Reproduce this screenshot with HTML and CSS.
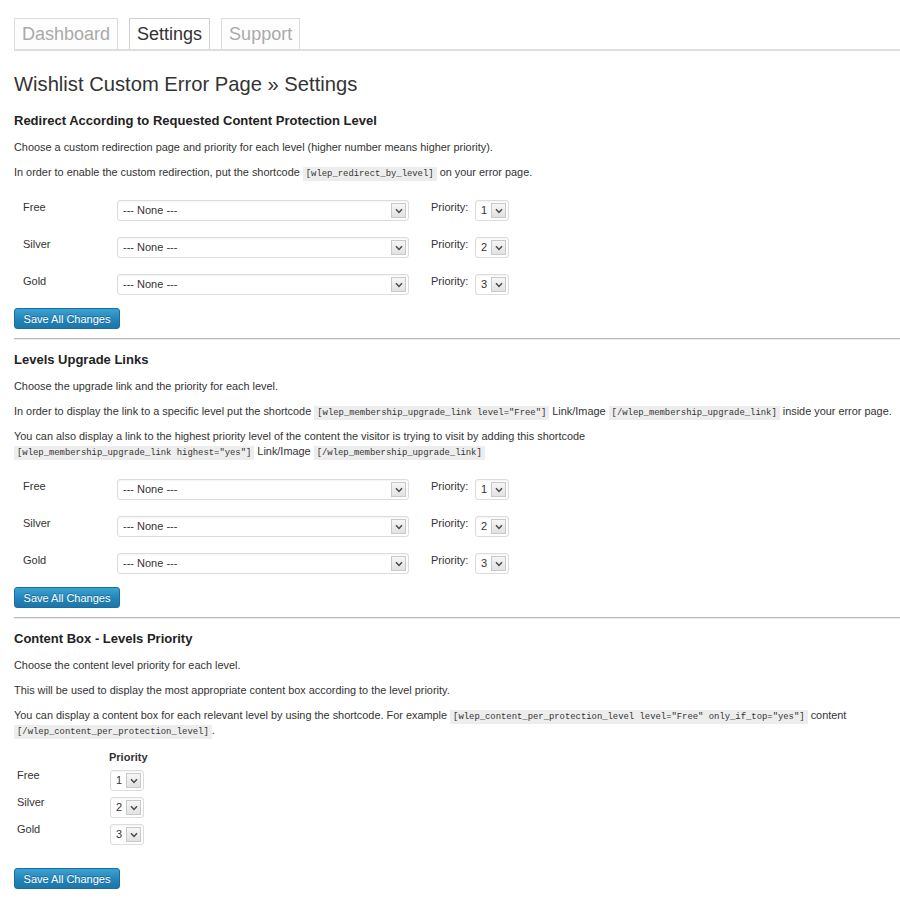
FILE: index.html
```html
<!DOCTYPE html>
<html>
<head>
<meta charset="utf-8">
<title>Wishlist Custom Error Page » Settings</title>
<link rel="stylesheet" href="styles.css">
</head>
<body>
<div class="wrap">
  <nav class="tabs">
    <a class="tab">Dashboard</a>
    <a class="tab active">Settings</a>
    <a class="tab">Support</a>
  </nav>

  <h1 class="title">Wishlist Custom Error Page » Settings</h1>

  <section class="sec">
    <h3 class="sec-title">Redirect According to Requested Content Protection Level</h3>
    <p class="txt">Choose a custom redirection page and priority for each level (higher number means higher priority).</p>
    <p class="txt">In order to enable the custom redirection, put the shortcode <code class="sc">[wlep_redirect_by_level]</code> on your error page.</p>
    <div class="levels">
      <div class="lvl">
        <span class="lbl">Free</span>
        <span class="sel wide"><span class="val">--- None ---</span><span class="arr"><svg width="8" height="6" viewBox="0 0 8 6"><path d="M1 1.2L4 4.4L7 1.2" fill="none" stroke="#4a4a4a" stroke-width="1.5"/></svg></span></span>
        <span class="plbl">Priority:</span>
        <span class="sel num"><span class="val">1</span><span class="arr"><svg width="8" height="6" viewBox="0 0 8 6"><path d="M1 1.2L4 4.4L7 1.2" fill="none" stroke="#4a4a4a" stroke-width="1.5"/></svg></span></span>
      </div>
      <div class="lvl">
        <span class="lbl">Silver</span>
        <span class="sel wide"><span class="val">--- None ---</span><span class="arr"><svg width="8" height="6" viewBox="0 0 8 6"><path d="M1 1.2L4 4.4L7 1.2" fill="none" stroke="#4a4a4a" stroke-width="1.5"/></svg></span></span>
        <span class="plbl">Priority:</span>
        <span class="sel num"><span class="val">2</span><span class="arr"><svg width="8" height="6" viewBox="0 0 8 6"><path d="M1 1.2L4 4.4L7 1.2" fill="none" stroke="#4a4a4a" stroke-width="1.5"/></svg></span></span>
      </div>
      <div class="lvl">
        <span class="lbl">Gold</span>
        <span class="sel wide"><span class="val">--- None ---</span><span class="arr"><svg width="8" height="6" viewBox="0 0 8 6"><path d="M1 1.2L4 4.4L7 1.2" fill="none" stroke="#4a4a4a" stroke-width="1.5"/></svg></span></span>
        <span class="plbl">Priority:</span>
        <span class="sel num"><span class="val">3</span><span class="arr"><svg width="8" height="6" viewBox="0 0 8 6"><path d="M1 1.2L4 4.4L7 1.2" fill="none" stroke="#4a4a4a" stroke-width="1.5"/></svg></span></span>
      </div>
    </div>
    <button class="btn">Save All Changes</button>
  </section>

  <hr class="sep">

  <section class="sec">
    <h3 class="sec-title">Levels Upgrade Links</h3>
    <p class="txt">Choose the upgrade link and the priority for each level.</p>
    <p class="txt">In order to display the link to a specific level put the shortcode <code class="sc">[wlep_membership_upgrade_link level="Free"]</code> Link/Image <code class="sc">[/wlep_membership_upgrade_link]</code> inside your error page.</p>
    <p class="txt">You can also display a link to the highest priority level of the content the visitor is trying to visit by adding this shortcode<br><code class="sc">[wlep_membership_upgrade_link highest="yes"]</code> Link/Image <code class="sc">[/wlep_membership_upgrade_link]</code></p>
    <div class="levels">
      <div class="lvl">
        <span class="lbl">Free</span>
        <span class="sel wide"><span class="val">--- None ---</span><span class="arr"><svg width="8" height="6" viewBox="0 0 8 6"><path d="M1 1.2L4 4.4L7 1.2" fill="none" stroke="#4a4a4a" stroke-width="1.5"/></svg></span></span>
        <span class="plbl">Priority:</span>
        <span class="sel num"><span class="val">1</span><span class="arr"><svg width="8" height="6" viewBox="0 0 8 6"><path d="M1 1.2L4 4.4L7 1.2" fill="none" stroke="#4a4a4a" stroke-width="1.5"/></svg></span></span>
      </div>
      <div class="lvl">
        <span class="lbl">Silver</span>
        <span class="sel wide"><span class="val">--- None ---</span><span class="arr"><svg width="8" height="6" viewBox="0 0 8 6"><path d="M1 1.2L4 4.4L7 1.2" fill="none" stroke="#4a4a4a" stroke-width="1.5"/></svg></span></span>
        <span class="plbl">Priority:</span>
        <span class="sel num"><span class="val">2</span><span class="arr"><svg width="8" height="6" viewBox="0 0 8 6"><path d="M1 1.2L4 4.4L7 1.2" fill="none" stroke="#4a4a4a" stroke-width="1.5"/></svg></span></span>
      </div>
      <div class="lvl">
        <span class="lbl">Gold</span>
        <span class="sel wide"><span class="val">--- None ---</span><span class="arr"><svg width="8" height="6" viewBox="0 0 8 6"><path d="M1 1.2L4 4.4L7 1.2" fill="none" stroke="#4a4a4a" stroke-width="1.5"/></svg></span></span>
        <span class="plbl">Priority:</span>
        <span class="sel num"><span class="val">3</span><span class="arr"><svg width="8" height="6" viewBox="0 0 8 6"><path d="M1 1.2L4 4.4L7 1.2" fill="none" stroke="#4a4a4a" stroke-width="1.5"/></svg></span></span>
      </div>
    </div>
    <button class="btn">Save All Changes</button>
  </section>

  <hr class="sep">

  <section class="sec">
    <h3 class="sec-title">Content Box - Levels Priority</h3>
    <p class="txt">Choose the content level priority for each level.</p>
    <p class="txt">This will be used to display the most appropriate content box according to the level priority.</p>
    <p class="txt">You can display a content box for each relevant level by using the shortcode. For example <code class="sc">[wlep_content_per_protection_level level="Free" only_if_top="yes"]</code> content <code class="sc">[/wlep_content_per_protection_level]</code>.</p>
    <div class="prio">
      <span></span>
      <span class="prio-head">Priority</span>
      <span class="lbl3">Free</span>
      <span class="sel num"><span class="val">1</span><span class="arr"><svg width="8" height="6" viewBox="0 0 8 6"><path d="M1 1.2L4 4.4L7 1.2" fill="none" stroke="#4a4a4a" stroke-width="1.5"/></svg></span></span>
      <span class="lbl3">Silver</span>
      <span class="sel num"><span class="val">2</span><span class="arr"><svg width="8" height="6" viewBox="0 0 8 6"><path d="M1 1.2L4 4.4L7 1.2" fill="none" stroke="#4a4a4a" stroke-width="1.5"/></svg></span></span>
      <span class="lbl3">Gold</span>
      <span class="sel num"><span class="val">3</span><span class="arr"><svg width="8" height="6" viewBox="0 0 8 6"><path d="M1 1.2L4 4.4L7 1.2" fill="none" stroke="#4a4a4a" stroke-width="1.5"/></svg></span></span>
    </div>
    <button class="btn btn-last">Save All Changes</button>
  </section>
</div>
</body>
</html>
```

FILE: styles.css
```css
html, body {
  margin: 0;
  padding: 0;
  background: #fff;
}

body {
  font-family: "Liberation Sans", Arial, sans-serif;
  font-size: 11px;
  color: #333;
}

.wrap {
  padding: 18px 0 0 14px;
}

/* Tabs */
.tabs {
  display: flex;
  align-items: flex-end;
  border-bottom: 2px solid #dedede;
  height: 31px;
}

.tab {
  display: block;
  height: 30px;
  line-height: 30px;
  padding: 0 7px;
  margin-right: 11px;
  border: 1px solid #dcdcdc;
  border-bottom: 0;
  background: #fdfdfd;
  font-size: 18px;
  color: #aaa;
}

.tab.active {
  color: #333;
  background: #fff;
  border-color: #d0d0d0;
}

/* Title */
.title {
  margin: 21px 0 0;
  font-size: 20.2px;
  line-height: 24px;
  font-weight: normal;
  color: #333;
}

.sec-title {
  margin: 17px 0 0;
  font-size: 13px;
  line-height: 16px;
  font-weight: bold;
  color: #222;
}

.sep + .sec .sec-title {
  margin-top: 12px;
}

.txt {
  margin: 10px 0 0;
  line-height: 15px;
  font-size: 10.9px;
}

.sec-title + .txt {
  margin-top: 11px;
}

.txt + .txt {
  margin-top: 10px;
}

.sc {
  font-family: "Liberation Mono", "Courier New", monospace;
  font-size: 8.9px;
  line-height: 1;
  background: #ededed;
  padding: 2px 3px;
  color: #333;
}

/* Level rows */
.levels {
  margin-top: 20px;
  display: flex;
  flex-direction: column;
  gap: 16px;
}

.lvl {
  display: flex;
  align-items: flex-start;
}

.lbl {
  width: 94px;
  padding-left: 9px;
  line-height: 15px;
}

.plbl {
  width: 44px;
  margin-left: 22px;
  line-height: 15px;
}

.sel {
  box-sizing: border-box;
  display: flex;
  align-items: center;
  height: 21px;
  border: 1px solid #dcdcdc;
  border-radius: 3px;
  background: #fff;
  box-shadow: inset 0 1px 2px rgba(0, 0, 0, 0.05);
  color: #333;
}

.sel .val {
  flex: 1;
  padding-left: 5px;
  line-height: 19px;
}

.sel .arr {
  box-sizing: border-box;
  width: 15px;
  height: 15px;
  margin-right: 2px;
  display: flex;
  align-items: center;
  justify-content: center;
  border: 1px solid #c9c9c9;
  background: linear-gradient(#f6f6f6, #e2e2e2);
}

.sel.wide {
  width: 292px;
}

.sel.num {
  width: 34px;
}

/* Button */
.btn {
  display: block;
  box-sizing: border-box;
  width: 106px;
  height: 21px;
  margin-top: 13px;
  padding: 0;
  font-family: "Liberation Sans", Arial, sans-serif;
  font-size: 11px;
  color: #fff;
  background: linear-gradient(#3aa3d3, #2384b9 55%, #1d76a8);
  border: 1px solid #1c6d9b;
  border-radius: 3px;
  text-shadow: 0 -1px 0 rgba(0, 0, 0, 0.3);
}

.btn-last {
  margin-top: 23px;
}

/* Separator */
.sep {
  margin: 9px 0 0;
  border: 0;
  border-top: 1px solid #b9b9b9;
  border-bottom: 1px solid #ececec;
  height: 0;
}

/* Priority grid */
.prio {
  margin-top: 12px;
  display: grid;
  grid-template-columns: 96px 35px;
  row-gap: 4px;
  align-items: start;
}

.prio-head {
  font-weight: bold;
  line-height: 15px;
  margin-left: -1px;
  margin-bottom: -1px;
}

.lbl3 {
  padding-left: 3px;
  line-height: 15px;
}

.prio .sel {
  margin-top: 2px;
}
```
